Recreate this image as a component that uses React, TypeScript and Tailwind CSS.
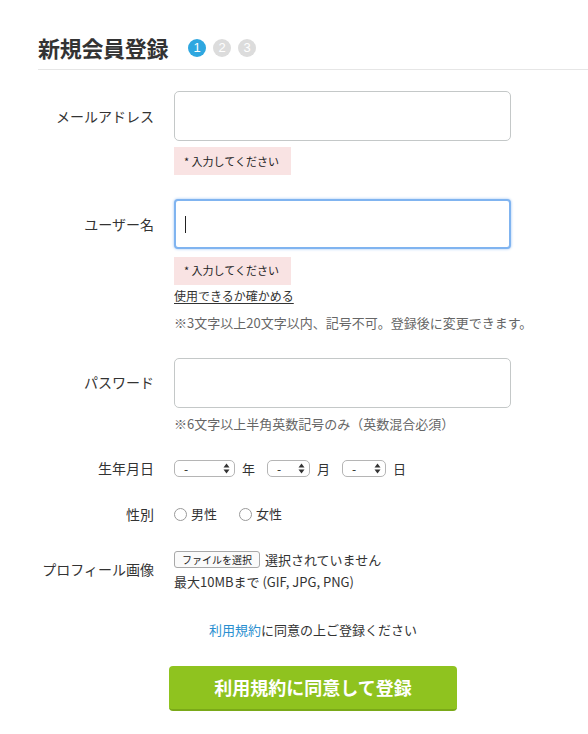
import React from "react";

const jp = "font-['Noto_Sans_CJK_JP','Noto_Sans',sans-serif]";

function Label({ children }: { children: React.ReactNode }) {
  return (
    <div className="w-[116px] shrink-0 whitespace-nowrap text-right text-[14px] text-[#333]">
      {children}
    </div>
  );
}

function ErrorBox() {
  return (
    <div className="inline-flex h-[28px] w-[117px] items-center pl-[10px] text-[11px] text-[#222] bg-[#f9e3e3]">
      * 入力してください
    </div>
  );
}

function SelectBox({ w }: { w: string }) {
  return (
    <div
      className={`${w} flex h-[17px] items-center justify-between rounded-[5px] border border-[#b5b5b5] bg-white pl-[9px] pr-[4px] text-[12px] leading-none text-[#222]`}
    >
      <span>-</span>
      <svg width="7" height="11" viewBox="0 0 7 11">
        <path d="M3.5 0.5 L6.5 4.5 H0.5 Z" fill="#333" />
        <path d="M3.5 10.5 L6.5 6.5 H0.5 Z" fill="#333" />
      </svg>
    </div>
  );
}

function Radio({ text }: { text: string }) {
  return (
    <div className="flex items-center gap-[4px]">
      <span className="inline-block h-[13px] w-[13px] rounded-full border border-[#9a9a9a] bg-white" />
      <span>{text}</span>
    </div>
  );
}

export default function App() {
  return (
    <div className={`${jp} min-h-[734px] w-[588px] bg-white text-[#333]`}>
      <div className="ml-[38px]">
        <div className="flex items-center border-b border-[#e6e6e6] pt-[33px] pb-[7px]">
          <h1 className="text-[22px] font-bold leading-[29px] tracking-[-0.3px] text-[#333]">新規会員登録</h1>
          <div className="ml-[20px] flex gap-[7px] font-['Liberation_Sans',sans-serif] text-[13px] text-white">
            <span className="flex h-[18px] w-[18px] items-center justify-center rounded-full bg-[#2ea7e0]">1</span>
            <span className="flex h-[18px] w-[18px] items-center justify-center rounded-full bg-[#dcdcdc]">2</span>
            <span className="flex h-[18px] w-[18px] items-center justify-center rounded-full bg-[#dcdcdc]">3</span>
          </div>
        </div>

        {/* email */}
        <div className="mt-[21px] flex items-center gap-[20px]">
          <Label>メールアドレス</Label>
          <div className="h-[50px] w-[337px] rounded-[5px] border border-[#c4c8c8] bg-white" />
        </div>
        <div className="ml-[136px] mt-[6px]">
          <ErrorBox />
        </div>

        {/* username */}
        <div className="mt-[24px] flex items-center gap-[20px]">
          <Label>ユーザー名</Label>
          <div className="flex h-[50px] w-[337px] items-center rounded-[4px] border-2 border-[#80b4f0] bg-white pl-[9px] shadow-[0_0_3px_#9cc3f2]">
            <span className="h-[17px] w-px bg-[#222]" />
          </div>
        </div>
        <div className="ml-[136px] mt-[7px]">
          <ErrorBox />
        </div>
        <div className="ml-[136px] mt-[2px] text-[12px] leading-[18px] text-[#333] underline underline-offset-2">
          使用できるか確かめる
        </div>
        <div className="ml-[136px] mt-[9px] text-[13px] leading-[18px] text-[#666]">
          ※3文字以上20文字以内、記号不可。登録後に変更できます。
        </div>

        {/* password */}
        <div className="mt-[26px] flex items-center gap-[20px]">
          <Label>パスワード</Label>
          <div className="h-[50px] w-[337px] rounded-[5px] border border-[#c4c8c8] bg-white" />
        </div>
        <div className="ml-[136px] mt-[7px] text-[13px] leading-[18px] text-[#666]">
          ※6文字以上半角英数記号のみ（英数混合必須）
        </div>

        {/* birthday */}
        <div className="mt-[26px] flex h-[20px] items-center gap-[20px] text-[13px]">
          <Label>生年月日</Label>
          <div className="flex items-center">
            <SelectBox w="w-[61px]" />
            <span className="ml-[7px]">年</span>
            <div className="ml-[12px]">
              <SelectBox w="w-[43px]" />
            </div>
            <span className="ml-[7px]">月</span>
            <div className="ml-[12px]">
              <SelectBox w="w-[44px]" />
            </div>
            <span className="ml-[7px]">日</span>
          </div>
        </div>

        {/* gender */}
        <div className="mt-[25px] flex items-center gap-[20px] text-[13px]">
          <Label>性別</Label>
          <div className="flex items-center gap-[22px]">
            <Radio text="男性" />
            <Radio text="女性" />
          </div>
        </div>

        {/* profile image */}
        <div className="mt-[25px] flex items-center gap-[20px] text-[13px]">
          <Label>プロフィール画像</Label>
          <div className="flex flex-col">
            <div className="flex items-center gap-[5px]">
              <span className="flex h-[17px] w-[86px] items-center justify-center rounded-[3px] border border-[#a8a8a8] bg-[#fafafa] text-[10px] text-[#222]">
                ファイルを選択
              </span>
              <span>選択されていません</span>
            </div>
            <div className="mt-[4px] text-[13px] leading-[17px]">最大10MBまで (GIF, JPG, PNG)</div>
          </div>
        </div>

        {/* terms */}
        <div className="mt-[31px] text-center text-[13px] leading-[18px] text-[#333]">
          <span className="text-[#2a8fd0]">利用規約</span>に同意の上ご登録ください
        </div>
        <div className="mt-[27px] flex justify-center">
          <button className="h-[45px] w-[288px] rounded-[4px] border-b-2 border-[#7aa918] bg-[#8fc31f] text-[18px] font-bold text-white">
            利用規約に同意して登録
          </button>
        </div>
      </div>
    </div>
  );
}
